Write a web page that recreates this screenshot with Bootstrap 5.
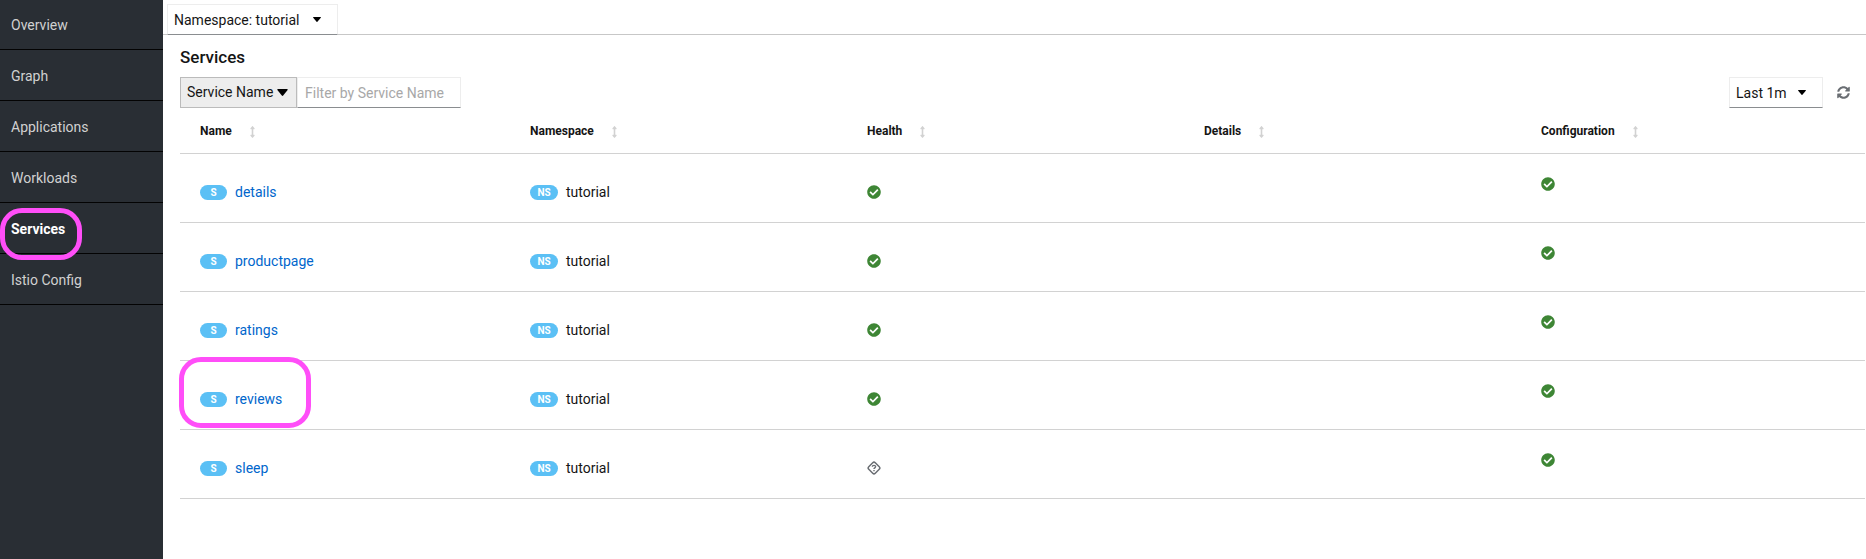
<!DOCTYPE html>
<html lang="en">
<head>
<meta charset="utf-8">
<meta name="viewport" content="width=device-width, initial-scale=1">
<title>Services</title>
<link href="https://cdn.jsdelivr.net/npm/bootstrap@5.3.0/dist/css/bootstrap.min.css" rel="stylesheet">
<style>
  body { font-family: "Roboto", "Liberation Sans", sans-serif; font-size: 14px; line-height: 20px; color: #151515; background: #fff; }
  .side-nav { width: 163px; background: #292e34; }
  .side-nav .nav-link { height: 51px; padding: 16px 11px 0; color: #d1d1d1; border-bottom: 1px solid #030303; }
  .side-nav .nav-item:first-child .nav-link { height: 50px; padding-top: 15px; }
  .side-nav .nav-link.active { color: #fff; font-weight: 700; }
  .ring { position: absolute; border: 5px solid #ff4ef8; border-radius: 22px; pointer-events: none; }
  .ring-nav { left: 0; top: 5px; width: 82px; height: 52px; }
  .ring-row { left: -1px; top: -4px; width: 132px; height: 71px; }
  .scope-bar { height: 35px; padding: 4px 4px 0; border-bottom: 1px solid #c7c7c7; }
  .picker { height: 31px; padding: 0 6px; color: #151515; background: #fff; border: 1px solid #ededed; border-bottom-color: #8a8d90; border-radius: 0; font-size: 14px; line-height: 20px; }
  .picker-scope { width: 171px; }
  .picker-time { width: 94px; }
  .picker svg { margin-right: 10px; }
  .view { padding: 0 1px 0 17px; }
  h1 { font-size: 17px; line-height: 24px; font-weight: 500; margin: 0; padding: 10px 0 8px; }
  .filter-kind { width: 117px; height: 31px; padding: 0 6px; border: 1px solid #bbb; border-radius: 0; font-size: 14px; color: #151515;
    background: #ededed url("data:image/svg+xml,%3Csvg xmlns='http://www.w3.org/2000/svg' viewBox='0 0 11 7'%3E%3Cpath d='M1 0h9q1 0 .6 1L6.2 6.6q-.7.7-1.4 0L.4 1Q0 0 1 0z'/%3E%3C/svg%3E") no-repeat right 8px center / 11px 7px; }
  .filter-text { width: 164px; height: 31px; padding: 0 7px; border: 1px solid #ededed; border-bottom-color: #8a8d90; border-radius: 0; font-size: 14px; }
  .filter-text::placeholder { color: #a8a8a8; }
  .refresh { width: 13px; height: 13px; margin: 0 15px 0 14px; color: #6a6e73; }
  .services { table-layout: fixed; margin: 0; border-color: #d2d2d2; --bs-table-color: #151515; }
  .services th { height: 45px; padding: 1px 0 0 13px; font-size: 12px; font-weight: 700; vertical-align: middle; }
  .services td { height: 69px; padding: 28px 0 0 13px; }
  .services th:first-child, .services td:first-child { padding-left: 20px; }
  .services td:last-child { padding-top: 20px; }
  .services a { color: #06c; text-decoration: none; }
  .kind { width: 27px; height: 15px; margin: 3px 8px 0 0; border-radius: 30px; background: #5bc0f5; color: #fff; font-size: 10px; line-height: 15px; font-weight: 700; text-align: center; }
  .kind-ns { width: 28px; }
  .sorter { width: 5px; height: 12px; margin-left: 18px; fill: #d2d2d2; }
  .state { display: block; width: 14px; height: 14px; margin-top: 3px; }
</style>
</head>
<body>
<svg class="d-none">
  <symbol id="caret" viewBox="0 0 8 5"><path d="M.6 0h6.8q.8 0 .4.7L4.4 4.7q-.4.4-.8 0L.2.7Q-.2 0 .6 0z"/></symbol>
  <symbol id="sort" viewBox="0 0 256 512" preserveAspectRatio="none"><path d="M214.059 377.941H168V134.059h46.059c21.382 0 32.09-25.851 16.971-40.971L144.971 7.029c-9.373-9.373-24.568-9.373-33.941 0L24.971 93.088c-15.119 15.119-4.411 40.971 16.971 40.971H88v243.882H41.941c-21.382 0-32.09 25.851-16.971 40.971l86.059 86.059c9.373 9.373 24.568 9.373 33.941 0l86.059-86.059c15.12-15.119 4.412-40.971-16.97-40.971z"/></symbol>
  <symbol id="ok" viewBox="0 0 512 512"><path fill="#3e8635" d="M504 256c0 136.967-111.033 248-248 248S8 392.967 8 256 119.033 8 256 8s248 111.033 248 248zM227.314 387.314l184-184c6.248-6.248 6.248-16.379 0-22.627l-22.627-22.627c-6.248-6.249-16.379-6.249-22.628 0L216 308.118l-70.059-70.059c-6.248-6.248-16.379-6.248-22.628 0l-22.627 22.627c-6.248 6.248-6.248 16.379 0 22.627l104 104c6.249 6.249 16.379 6.249 22.628.001z"/></symbol>
  <symbol id="unknown" viewBox="0 0 14 14"><g fill="none" stroke="#6a6e73"><rect x="2.4" y="2.4" width="9.2" height="9.2" rx="1.8" stroke-width="1.5" transform="rotate(45 7 7)"/><path stroke-width="1.4" d="M5.3 5.7C5.4 3.9 8.7 3.9 8.6 5.8 8.5 6.9 7 6.8 7 8.1M7 8.9v1.3"/></g></symbol>
  <symbol id="sync" viewBox="0 0 512 512"><path fill="currentColor" d="M370.72 133.28C339.458 104.008 298.888 87.962 255.848 88c-77.458.068-144.328 53.178-162.791 126.85-1.344 5.363-6.122 9.15-11.651 9.15H24.103c-7.498 0-13.194-6.807-11.807-14.176C33.933 94.924 134.813 8 256 8c66.448 0 126.791 26.136 171.315 68.685L463.03 40.97C478.149 25.851 504 36.559 504 57.941V192c0 13.255-10.745 24-24 24H345.941c-21.382 0-32.09-25.851-16.971-40.971l41.75-41.749zM32 296h134.059c21.382 0 32.09 25.851 16.971 40.971l-41.75 41.75c31.262 29.273 71.835 45.319 114.876 45.28 77.418-.07 144.315-53.144 162.787-126.849 1.344-5.363 6.122-9.15 11.651-9.15h57.304c7.498 0 13.194 6.807 11.807 14.176C478.067 417.076 377.187 504 256 504c-66.448 0-126.791-26.136-171.315-68.685L48.97 471.03C33.851 486.149 8 475.441 8 454.059V320c0-13.255 10.745-24 24-24z"/></symbol>
</svg>

<div class="d-flex min-vh-100">
  <nav class="side-nav flex-shrink-0" aria-label="Main">
    <ul class="nav flex-column">
      <li class="nav-item"><a class="nav-link" href="#">Overview</a></li>
      <li class="nav-item"><a class="nav-link" href="#">Graph</a></li>
      <li class="nav-item"><a class="nav-link" href="#">Applications</a></li>
      <li class="nav-item"><a class="nav-link" href="#">Workloads</a></li>
      <li class="nav-item position-relative"><a class="nav-link active" aria-current="page" href="#">Services</a><span class="ring ring-nav z-1"></span></li>
      <li class="nav-item"><a class="nav-link" href="#">Istio Config</a></li>
    </ul>
  </nav>

  <main class="flex-grow-1">
    <div class="scope-bar">
      <button type="button" class="picker picker-scope d-flex align-items-center justify-content-between">Namespace: tutorial <svg width="8" height="5" aria-hidden="true"><use href="#caret"/></svg></button>
    </div>
    <div class="view">
      <h1>Services</h1>
      <div class="d-flex align-items-center">
        <select class="filter-kind form-select" aria-label="Filter type"><option>Service Name</option></select>
        <input class="filter-text form-control" type="text" placeholder="Filter by Service Name" aria-label="Filter by Service Name">
        <button type="button" class="picker picker-time ms-auto d-flex align-items-center justify-content-between">Last 1m <svg width="8" height="5" aria-hidden="true"><use href="#caret"/></svg></button>
        <button type="button" class="refresh btn p-0 border-0 d-flex" aria-label="Refresh"><svg width="13" height="13"><use href="#sync"/></svg></button>
      </div>
      <table class="services table">
        <thead>
          <tr>
            <th scope="col">Name<svg class="sorter"><use href="#sort"/></svg></th>
            <th scope="col">Namespace<svg class="sorter"><use href="#sort"/></svg></th>
            <th scope="col">Health<svg class="sorter"><use href="#sort"/></svg></th>
            <th scope="col">Details<svg class="sorter"><use href="#sort"/></svg></th>
            <th scope="col">Configuration<svg class="sorter"><use href="#sort"/></svg></th>
          </tr>
        </thead>
        <tbody>
          <tr>
            <td><div class="d-flex"><span class="kind">S</span><a href="#">details</a></div></td>
            <td><div class="d-flex"><span class="kind kind-ns">NS</span>tutorial</div></td>
            <td><svg class="state"><use href="#ok"/></svg></td><td></td>
            <td><svg class="state"><use href="#ok"/></svg></td>
          </tr>
          <tr>
            <td><div class="d-flex"><span class="kind">S</span><a href="#">productpage</a></div></td>
            <td><div class="d-flex"><span class="kind kind-ns">NS</span>tutorial</div></td>
            <td><svg class="state"><use href="#ok"/></svg></td><td></td>
            <td><svg class="state"><use href="#ok"/></svg></td>
          </tr>
          <tr>
            <td><div class="d-flex"><span class="kind">S</span><a href="#">ratings</a></div></td>
            <td><div class="d-flex"><span class="kind kind-ns">NS</span>tutorial</div></td>
            <td><svg class="state"><use href="#ok"/></svg></td><td></td>
            <td><svg class="state"><use href="#ok"/></svg></td>
          </tr>
          <tr>
            <td class="position-relative"><div class="d-flex"><span class="kind">S</span><a href="#">reviews</a></div><span class="ring ring-row"></span></td>
            <td><div class="d-flex"><span class="kind kind-ns">NS</span>tutorial</div></td>
            <td><svg class="state"><use href="#ok"/></svg></td><td></td>
            <td><svg class="state"><use href="#ok"/></svg></td>
          </tr>
          <tr>
            <td><div class="d-flex"><span class="kind">S</span><a href="#">sleep</a></div></td>
            <td><div class="d-flex"><span class="kind kind-ns">NS</span>tutorial</div></td>
            <td><svg class="state"><use href="#unknown"/></svg></td><td></td>
            <td><svg class="state"><use href="#ok"/></svg></td>
          </tr>
        </tbody>
      </table>
    </div>
  </main>
</div>
<script src="https://cdn.jsdelivr.net/npm/bootstrap@5.3.0/dist/js/bootstrap.bundle.min.js"></script>
</body>
</html>
